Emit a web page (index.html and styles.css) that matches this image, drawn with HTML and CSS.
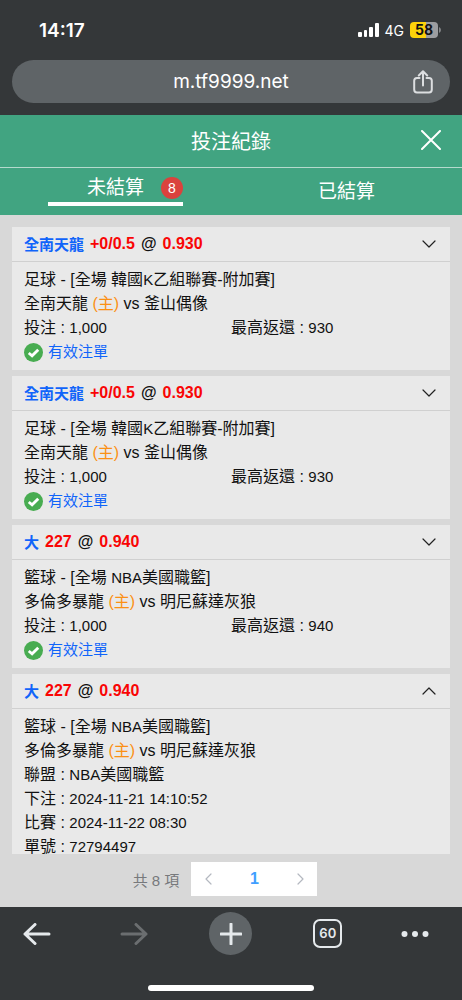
FILE: index.html
```html
<!DOCTYPE html>
<html lang="zh-Hant">
<head>
<meta charset="utf-8">
<meta name="viewport" content="width=device-width, initial-scale=1">
<title>投注紀錄</title>
<link rel="stylesheet" href="styles.css">
</head>
<body>
<div class="screen">
  <div class="browser-top">
    <div class="status">
      <span class="clock">14:17</span>
      <div class="signals">
        <svg class="bars" viewBox="0 0 21 14" aria-hidden="true"><rect x="0" y="9" width="4" height="5" rx="1"/><rect x="6" y="7" width="3" height="7" rx="1"/><rect x="11" y="4" width="4" height="10" rx="1"/><rect x="17" y="0" width="4" height="14" rx="1"/></svg>
        <span class="network">4G</span>
        <span class="battery"><span class="battery-level">58</span><svg class="battery-tip" viewBox="0 0 2 6" aria-hidden="true"><path d="M0 0Q2 1 2 3T0 6Z"/></svg></span>
      </div>
    </div>
    <div class="address">
      <span class="url">m.tf9999.net</span>
      <button class="share" type="button" aria-label="分享">
        <svg viewBox="0 0 20 24" aria-hidden="true"><path d="M6.500 8H4Q1.200 8 1.200 10.800V19.500Q1.200 22.500 4 22.500H16Q18.800 22.500 18.800 19.500V10.800Q18.800 8 16 8H13.500M10 15.500V1.500M5.800 5.500L10 1.300L14.200 5.500"/></svg>
      </button>
    </div>
  </div>

  <header class="title-bar">
    <h1>投注紀錄</h1>
    <button class="close" type="button" aria-label="關閉"><svg viewBox="0 0 20 20" aria-hidden="true"><path d="M1 1L19 19M19 1L1 19"/></svg></button>
  </header>
  <nav class="tabs">
    <button class="tab active" type="button"><span class="tab-label">未結算<span class="badge">8</span></span></button>
    <button class="tab" type="button"><span class="tab-label">已結算</span></button>
  </nav>

  <main class="content">
    <div class="list">
      <article class="card">
        <button class="card-head" type="button"><span class="pick">全南天龍</span><span class="odds">+0/0.5</span><span>@</span><span class="odds">0.930</span><svg class="chevron" viewBox="0 0 14 8" aria-hidden="true"><path d="M1 1L7 7L13 1"/></svg></button>
        <div class="card-body">
          <p>足球 - [全場 韓國<span class="latin">K</span>乙組聯賽-附加賽]</p>
          <p>全南天龍 <span class="home">(主)</span> vs 釜山偶像</p>
          <div class="amounts"><p>投注 : <span class="latin">1,000</span></p><p>最高返還 : <span class="latin">930</span></p></div>
          <p class="valid"><svg viewBox="0 0 20 20" aria-hidden="true"><circle cx="10" cy="10" r="10"/><path d="M5 10.500L8.500 13.500L15 7"/></svg>有效注單</p>
        </div>
      </article>
      <article class="card">
        <button class="card-head" type="button"><span class="pick">全南天龍</span><span class="odds">+0/0.5</span><span>@</span><span class="odds">0.930</span><svg class="chevron" viewBox="0 0 14 8" aria-hidden="true"><path d="M1 1L7 7L13 1"/></svg></button>
        <div class="card-body">
          <p>足球 - [全場 韓國<span class="latin">K</span>乙組聯賽-附加賽]</p>
          <p>全南天龍 <span class="home">(主)</span> vs 釜山偶像</p>
          <div class="amounts"><p>投注 : <span class="latin">1,000</span></p><p>最高返還 : <span class="latin">930</span></p></div>
          <p class="valid"><svg viewBox="0 0 20 20" aria-hidden="true"><circle cx="10" cy="10" r="10"/><path d="M5 10.500L8.500 13.500L15 7"/></svg>有效注單</p>
        </div>
      </article>
      <article class="card">
        <button class="card-head" type="button"><span class="pick">大</span><span class="odds">227</span><span>@</span><span class="odds">0.940</span><svg class="chevron" viewBox="0 0 14 8" aria-hidden="true"><path d="M1 1L7 7L13 1"/></svg></button>
        <div class="card-body">
          <p>籃球 - [全場 <span class="latin">NBA</span>美國職籃]</p>
          <p>多倫多暴龍 <span class="home">(主)</span> vs 明尼蘇達灰狼</p>
          <div class="amounts"><p>投注 : <span class="latin">1,000</span></p><p>最高返還 : <span class="latin">940</span></p></div>
          <p class="valid"><svg viewBox="0 0 20 20" aria-hidden="true"><circle cx="10" cy="10" r="10"/><path d="M5 10.500L8.500 13.500L15 7"/></svg>有效注單</p>
        </div>
      </article>
      <article class="card">
        <button class="card-head" type="button" aria-expanded="true"><span class="pick">大</span><span class="odds">227</span><span>@</span><span class="odds">0.940</span><svg class="chevron" viewBox="0 0 14 8" aria-hidden="true"><path d="M1 7L7 1L13 7"/></svg></button>
        <div class="card-body">
          <p>籃球 - [全場 <span class="latin">NBA</span>美國職籃]</p>
          <p>多倫多暴龍 <span class="home">(主)</span> vs 明尼蘇達灰狼</p>
          <p>聯盟 : <span class="latin">NBA</span>美國職籃</p>
          <p>下注 : <span class="latin">2024-11-21 14:10:52</span></p>
          <p>比賽 : <span class="latin">2024-11-22 08:30</span></p>
          <p>單號 : <span class="latin">72794497</span></p>
        </div>
      </article>
    </div>
    <div class="pagination">
      <span>共 8 項</span>
      <div class="pages">
        <button type="button" aria-label="上一頁"><svg viewBox="0 0 8 12" aria-hidden="true"><path d="M7 1L2 6L7 11"/></svg></button>
        <button class="current" type="button">1</button>
        <button type="button" aria-label="下一頁"><svg viewBox="0 0 8 12" aria-hidden="true"><path d="M1 1L6 6L1 11"/></svg></button>
      </div>
    </div>
  </main>

  <footer class="browser-bottom">
    <div class="toolbar">
      <button type="button" aria-label="返回"><svg class="arrow" viewBox="0 0 28 22" aria-hidden="true"><path d="M26 11H2M12 1.500L2 11L12 20.500"/></svg></button>
      <button class="disabled" type="button" aria-label="前進"><svg class="arrow" viewBox="0 0 28 22" aria-hidden="true"><path d="M2 11H26M16 1.500L26 11L16 20.500"/></svg></button>
      <button class="new-tab" type="button" aria-label="新分頁"><svg class="plus" viewBox="0 0 22 22" aria-hidden="true"><path d="M11 1V21M1 11H21"/></svg></button>
      <button type="button"><span class="tab-count">60</span></button>
      <button class="more" type="button" aria-label="更多"><svg class="dots" viewBox="0 0 28 6" aria-hidden="true"><circle cx="3.500" cy="3" r="3"/><circle cx="14" cy="3" r="3"/><circle cx="24.500" cy="3" r="3"/></svg></button>
    </div>
    <div class="home-indicator"></div>
  </footer>
</div>
</body>
</html>
```
FILE: styles.css
```css
* { box-sizing: border-box; }
body, h1, p { margin: 0; }
body {
  font-family: "Liberation Sans", "Noto Sans CJK TC", sans-serif;
  font-size: 16px;
  color: #111;
  background: #343739;
}
button {
  font: inherit;
  color: inherit;
  background: none;
  border: 0;
  padding: 0;
}
svg { display: block; fill: none; stroke-linecap: round; stroke-linejoin: round; }
.screen { display: flex; flex-direction: column; height: 100vh; }

/* Browser top */
.browser-top {
  flex: none;
  padding: 16px 12px 12px;
  color: #fff;
  background: #343739;
  font-family: Inter, sans-serif;
}
.status {
  display: flex;
  justify-content: space-between;
  align-items: center;
  height: 28px;
  padding: 0 9px 0 27px;
}
.clock { font-size: 19px; font-weight: 600; }
.signals { display: flex; align-items: center; gap: 6px; }
.bars { width: 21px; height: 14px; fill: #fff; }
.network { font-size: 14px; }
.battery { display: flex; align-items: center; gap: 1px; }
.battery-level {
  width: 28px;
  border-radius: 4px;
  background: linear-gradient(90deg, #fdd20a 58%, #9c9da0 58%);
  color: #111;
  font-size: 14px;
  font-weight: 700;
  line-height: 16px;
  text-align: center;
}
.battery-tip { width: 2px; height: 6px; fill: #85878a; }
.address {
  display: grid;
  grid-template-columns: 1fr auto 1fr;
  align-items: center;
  height: 43px;
  margin-top: 16px;
  padding: 0 17px;
  border-radius: 22px;
  background: #5f6467;
}
.url { grid-column: 2; font-size: 19px; }
.share { justify-self: end; }
.share svg { width: 20px; height: 24px; stroke: #dcdee0; stroke-width: 2; }

/* Page header */
.title-bar {
  flex: none;
  display: grid;
  grid-template-columns: 1fr auto 1fr;
  align-items: center;
  height: 53px;
  padding: 0 21px 2px;
  border-bottom: 1px solid #b5dacd;
  color: #fff;
  background: #41a481;
}
.title-bar h1 { grid-column: 2; font-size: 20px; font-weight: 400; }
.close { justify-self: end; }
.close svg { width: 20px; height: 20px; stroke: #fff; stroke-width: 2; }
.tabs {
  flex: none;
  display: grid;
  grid-template-columns: 1fr 1fr;
  height: 47px;
  padding-bottom: 9px;
  color: #fff;
  background: #41a481;
}
.tab { display: flex; justify-content: center; align-items: stretch; font-size: 19px; }
.tab-label { position: relative; width: 135px; padding-top: 10px; line-height: 28px; }
.active .tab-label { padding-top: 6px; border-bottom: 4px solid #fff; }
.badge {
  position: absolute;
  top: 9px;
  right: 0;
  width: 22px;
  border-radius: 50%;
  background: #da423d;
  font-size: 14px;
  line-height: 22px;
}

/* Bets */
.content {
  flex: 1;
  min-height: 0;
  display: flex;
  flex-direction: column;
  padding: 12px 12px 11px;
  background: #d8d8d8;
}
.list {
  flex: 1;
  min-height: 0;
  display: flex;
  flex-direction: column;
  gap: 6px;
  overflow: hidden;
}
.card { flex: none; background: #e9e9e9; }
.card-head {
  display: flex;
  align-items: center;
  gap: 6px;
  width: 100%;
  height: 35px;
  padding: 0 14px 1px 12px;
  border-bottom: 1px solid #d0d0d0;
  font-size: 16px;
  font-weight: 700;
}
.pick { color: #1064fa; font-size: 15px; }
.odds { color: #f90505; }
.chevron { width: 14px; height: 8px; margin-left: auto; stroke: #222; stroke-width: 1.2; }
.card-body { padding: 6px 12px; line-height: 24px; }
.latin { font-size: 15px; }
.home { color: #fb9014; }
.amounts { display: grid; grid-template-columns: 1fr 1fr; }
.valid { display: flex; align-items: center; gap: 5px; color: #1064fa; font-size: 15px; }
.valid svg { width: 19px; height: 19px; }
.valid circle { fill: #48ac51; }
.valid path { stroke: #fff; stroke-width: 3; stroke-linecap: butt; stroke-linejoin: miter; }

/* Pagination */
.pagination {
  flex: none;
  display: flex;
  justify-content: center;
  align-items: center;
  gap: 12px;
  padding-top: 8px;
  padding-right: 12px;
  color: #77797c;
  font-size: 15px;
}
.pages {
  display: grid;
  grid-template-columns: 33px 60px 33px;
  height: 34px;
  background: #fff;
}
.pages button { display: grid; place-items: center; }
.pages svg { width: 8px; height: 12px; stroke: #b4b8c0; stroke-width: 1.2; }
.pages .current { color: #409eff; font-size: 16px; font-weight: 700; }

/* Browser bottom */
.browser-bottom { flex: none; padding: 5px 0 9px; background: #343739; }
.toolbar { display: grid; grid-template-columns: repeat(5, 1fr); margin: 0 -11px; color: #e5e9ec; }
.toolbar button { display: grid; place-items: center; height: 43px; }
.toolbar svg { stroke: #e5e9ec; stroke-width: 3; }
.toolbar .more { padding-right: 20px; }
.arrow { width: 28px; height: 22px; }
.toolbar .disabled svg { stroke: #6b6e70; }
.new-tab::before { content: ""; grid-area: 1 / 1; width: 43px; height: 43px; border-radius: 50%; background: #5f6467; }
.plus { grid-area: 1 / 1; width: 22px; height: 22px; }
.tab-count {
  width: 29px;
  border: 2px solid #e5e9ec;
  border-radius: 7px;
  font-family: Inter, sans-serif;
  font-size: 13px;
  font-weight: 600;
  line-height: 25px;
}
.toolbar .dots { width: 28px; height: 6px; fill: #e5e9ec; stroke: none; }
.home-indicator {
  width: 36%;
  height: 6px;
  margin: 30px auto 0;
  border-radius: 3px;
  background: #fff;
}
```
